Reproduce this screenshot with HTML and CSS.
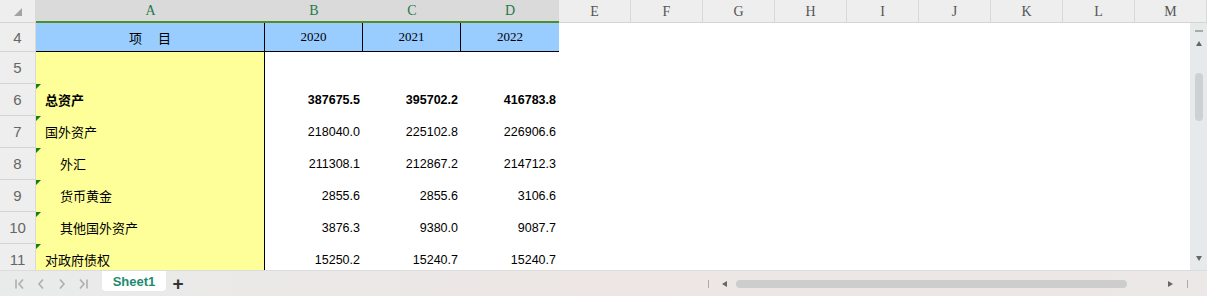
FILE: index.html
```html
<!DOCTYPE html>
<html lang="zh-CN">
<head>
  <meta charset="UTF-8" />
  <title>Sheet1</title>
  <link rel="stylesheet" href="styles.css">
</head>
<body>
  <div class="sheet">
    <div class="grid">
      <div class="corner"><span class="corner-tri"></span></div>
      <div class="col-head sel">A</div>
      <div class="col-head sel">B</div>
      <div class="col-head sel">C</div>
      <div class="col-head sel">D</div>
      <div class="col-head">E</div>
      <div class="col-head">F</div>
      <div class="col-head">G</div>
      <div class="col-head">H</div>
      <div class="col-head">I</div>
      <div class="col-head">J</div>
      <div class="col-head">K</div>
      <div class="col-head">L</div>
      <div class="col-head">M</div>

      <div class="row-head">4</div>
      <div class="cell title">项&emsp;&nbsp;目</div>
      <div class="cell title year">2020</div>
      <div class="cell title year">2021</div>
      <div class="cell title year last">2022</div>
      <div class="cell blank span9"></div>

      <div class="row-head">5</div>
      <div class="cell label"></div>
      <div class="cell num"></div>
      <div class="cell num"></div>
      <div class="cell num"></div>
      <div class="cell blank span9"></div>

      <div class="row-head">6</div>
      <div class="cell label mark bold">总资产</div>
      <div class="cell num bold">387675.5</div>
      <div class="cell num bold">395702.2</div>
      <div class="cell num bold">416783.8</div>
      <div class="cell blank span9"></div>

      <div class="row-head">7</div>
      <div class="cell label mark">国外资产</div>
      <div class="cell num">218040.0</div>
      <div class="cell num">225102.8</div>
      <div class="cell num">226906.6</div>
      <div class="cell blank span9"></div>

      <div class="row-head">8</div>
      <div class="cell label mark indent">外汇</div>
      <div class="cell num">211308.1</div>
      <div class="cell num">212867.2</div>
      <div class="cell num">214712.3</div>
      <div class="cell blank span9"></div>

      <div class="row-head">9</div>
      <div class="cell label mark indent">货币黄金</div>
      <div class="cell num">2855.6</div>
      <div class="cell num">2855.6</div>
      <div class="cell num">3106.6</div>
      <div class="cell blank span9"></div>

      <div class="row-head">10</div>
      <div class="cell label mark indent">其他国外资产</div>
      <div class="cell num">3876.3</div>
      <div class="cell num">9380.0</div>
      <div class="cell num">9087.7</div>
      <div class="cell blank span9"></div>

      <div class="row-head">11</div>
      <div class="cell label mark">对政府债权</div>
      <div class="cell num">15250.2</div>
      <div class="cell num">15240.7</div>
      <div class="cell num">15240.7</div>
      <div class="cell blank span9"></div>
    </div>

    <div class="vscroll">
      <span class="vs-dash"></span>
      <span class="tri up"></span>
      <span class="vs-thumb"></span>
      <span class="vs-fill"></span>
      <span class="tri down"></span>
    </div>
  </div>

  <div class="tabbar">
    <div class="nav">
      <svg class="nav-btn" width="12" height="12" viewBox="0 0 12 12"><path d="M2 1.5v9M9 1.5L5 6l4 4.5"/></svg>
      <svg class="nav-btn" width="12" height="12" viewBox="0 0 12 12"><path d="M8 1.5L4 6l4 4.5"/></svg>
      <svg class="nav-btn" width="12" height="12" viewBox="0 0 12 12"><path d="M4 1.5L8 6l-4 4.5"/></svg>
      <svg class="nav-btn" width="12" height="12" viewBox="0 0 12 12"><path d="M3 1.5L7 6l-4 4.5M10 1.5v9"/></svg>
    </div>
    <div class="tab">Sheet1</div>
    <div class="add">+</div>
    <div class="hscroll">
      <span class="hs-bar"></span>
      <span class="tri left"></span>
      <span class="hs-thumb"></span>
      <span class="tri right"></span>
      <span class="hs-bar"></span>
    </div>
  </div>
</body>
</html>
```

FILE: styles.css
```css
* {
  box-sizing: border-box;
}

body {
  margin: 0;
  width: 1207px;
  height: 296px;
  overflow: hidden;
  background: #fff;
  font-family: Arial, "Liberation Sans", "Noto Sans CJK SC", sans-serif;
}

.sheet {
  position: relative;
  height: 270px;
  overflow: hidden;
}

.grid {
  display: grid;
  grid-template-columns: 36px 229px 98px 98px 98px repeat(9, 72px);
  grid-template-rows: 23px 29px repeat(7, 32px);
}

/* header row */
.corner {
  background: #eeeeee;
  border-right: 1px solid #d9d9d9;
  border-bottom: 1px solid #d4d4d4;
  position: relative;
}

.corner-tri {
  position: absolute;
  left: 14px;
  top: 8px;
  width: 0;
  height: 0;
  border-left: 8px solid transparent;
  border-bottom: 8px solid #a3a3a3;
}

.col-head {
  background: #eeeeee;
  border-right: 1px solid #d9d9d9;
  border-bottom: 1px solid #d4d4d4;
  color: #555;
  font-family: "Liberation Serif", serif;
  font-size: 14px;
  display: flex;
  align-items: center;
  justify-content: center;
  padding-top: 1px;
}

.col-head.sel {
  background: #dadada;
  color: #1e7a4a;
  border-right: none;
  border-bottom: 2px solid #4a8f2a;
}

.row-head {
  grid-column: 1;
  background: #eeeeee;
  border-right: 1px solid #d9d9d9;
  border-bottom: 1px solid #d4d4d4;
  color: #666;
  font-size: 15px;
  display: flex;
  align-items: center;
  justify-content: center;
}

/* cells */
.cell {
  display: flex;
  align-items: center;
  font-size: 13px;
  color: #000;
  white-space: nowrap;
}

.title {
  background: #99ccff;
  border-right: 1px solid #000;
  border-bottom: 1px solid #000;
  justify-content: center;
  font-family: "Noto Sans CJK SC", sans-serif;
}

.title.year {
  font-family: "Liberation Serif", serif;
  font-size: 13px;
}

.title.last {
  border-right: none;
}

.label {
  background: #ffff99;
  border-right: 1px solid #000;
  padding-left: 9px;
  padding-bottom: 2px;
  position: relative;
  font-family: "Noto Sans CJK SC", sans-serif;
}

.label.indent {
  padding-left: 24px;
}

.mark::before {
  content: "";
  position: absolute;
  left: 0;
  top: 0;
  width: 0;
  height: 0;
  border-top: 5px solid #1a7a1a;
  border-right: 5px solid transparent;
}

.num {
  justify-content: flex-end;
  padding-right: 3px;
  padding-bottom: 1px;
  font-size: 12.5px;
}

.bold {
  font-weight: bold;
}

.blank {
  background: #fff;
}

.span9 {
  grid-column: span 9;
}

/* vertical scrollbar, overlays the grid */
.vscroll {
  position: absolute;
  right: 0;
  top: 23px;
  bottom: 0;
  width: 17px;
  background: #e7eaea;
  display: flex;
  flex-direction: column;
  align-items: center;
}

.vs-dash {
  margin-top: 7px;
  width: 8px;
  height: 2px;
  background: #aaa;
}

.vs-thumb {
  margin-top: 27px;
  width: 8px;
  height: 48px;
  border-radius: 4px;
  background: #cdd1d1;
}

.vs-fill {
  flex: 1;
}

.tri {
  width: 0;
  height: 0;
}

.tri.up {
  margin-top: 9px;
  border-left: 3px solid transparent;
  border-right: 3px solid transparent;
  border-bottom: 5px solid #666;
}

.tri.down {
  margin-bottom: 9px;
  border-left: 3px solid transparent;
  border-right: 3px solid transparent;
  border-top: 5px solid #666;
}

.tri.left {
  border-top: 3px solid transparent;
  border-bottom: 3px solid transparent;
  border-right: 5px solid #666;
}

.tri.right {
  border-top: 3px solid transparent;
  border-bottom: 3px solid transparent;
  border-left: 5px solid #666;
}

/* sheet tabs */
.tabbar {
  height: 26px;
  border-top: 1px solid #dcdcdc;
  background: linear-gradient(to right, #e9ebeb, #ede6e4 50%, #ece8e7);
  display: flex;
  align-items: flex-start;
}

.nav {
  display: flex;
  width: 102px;
  padding-left: 14px;
  gap: 9px;
  height: 25px;
  align-items: center;
}

.nav-btn {
  fill: none;
  stroke: #aeaeae;
  stroke-width: 1.6;
}

.tab {
  width: 64px;
  height: 20px;
  background: #fff;
  border-radius: 0 0 4px 4px;
  color: #1e8a6e;
  font-weight: bold;
  font-size: 13px;
  display: flex;
  align-items: center;
  justify-content: center;
}

.add {
  width: 24px;
  height: 25px;
  display: flex;
  align-items: center;
  justify-content: center;
  font-size: 19px;
  font-weight: bold;
  color: #333;
}

.hscroll {
  margin-left: auto;
  display: flex;
  align-items: center;
  height: 25px;
  padding-right: 19px;
}

.hs-bar {
  width: 1px;
  height: 8px;
  background: #aaa;
}

.hscroll .tri.left {
  margin: 0 9px 0 13px;
}

.hs-thumb {
  width: 391px;
  height: 8px;
  border-radius: 4px;
  background: #cdcdcd;
}

.hscroll .tri.right {
  margin: 0 14px 0 41px;
}
```
